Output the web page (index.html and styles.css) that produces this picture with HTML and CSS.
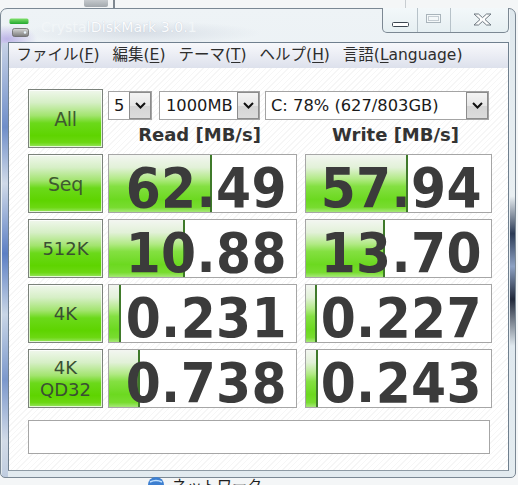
FILE: index.html
```html
<!DOCTYPE html>
<html lang="ja">
<head>
<meta charset="utf-8">
<title>CrystalDiskMark</title>
<link rel="stylesheet" href="styles.css">
</head>
<body>
<div class="deco deco-icon"></div>
<div class="deco deco-line1"></div>
<div class="deco deco-line2"></div>

<div class="window">
  <div class="titlebar">
    <svg class="app-icon" width="20" height="20" viewBox="0 0 20 20">
      <defs>
        <linearGradient id="gbar" x1="0" y1="0" x2="0" y2="1">
          <stop offset="0" stop-color="#7fe06a"/>
          <stop offset="1" stop-color="#22a830"/>
        </linearGradient>
        <linearGradient id="gdrv" x1="0" y1="0" x2="0" y2="1">
          <stop offset="0" stop-color="#d8d8d8"/>
          <stop offset="1" stop-color="#7a7a7a"/>
        </linearGradient>
      </defs>
      <rect x="0.5" y="0.5" width="19" height="5.5" rx="1.5" fill="url(#gbar)"/>
      <rect x="3.5" y="10.5" width="16" height="8" rx="2" fill="url(#gdrv)" stroke="#666" stroke-width="0.8"/>
      <circle cx="16" cy="14.5" r="1.2" fill="#eaf6ff"/>
    </svg>
    <span class="title"><span class="t-faint">Crysta</span>lDiskMark 3.0.<span class="t-faint">1</span></span>
    <div class="caption">
      <span class="cbtn cmin">
        <svg width="18" height="6" viewBox="0 0 18 6"><rect x="0.5" y="0.5" width="16" height="4" rx="1" fill="#fff" stroke="#3c4650"/></svg>
      </span>
      <span class="cbtn cmax">
        <svg width="16" height="10" viewBox="0 0 16 10"><rect x="0.5" y="0.5" width="14" height="8" fill="#f4f8f9" stroke="#a9b4bb"/><rect x="2.5" y="2.5" width="10" height="4" fill="none" stroke="#c4ccd2"/></svg>
      </span>
      <span class="cbtn cclose">
        <svg width="19" height="13" viewBox="0 0 19 13"><path d="M1 1 H5.5 L9.5 4.6 L13.5 1 H18 L12 6.5 L18 12 H13.5 L9.5 8.4 L5.5 12 H1 L7 6.5 Z" fill="#fdfdfd" stroke="#6e7880" stroke-width="1" stroke-linejoin="round"/></svg>
      </span>
    </div>
  </div>

  <div class="client">
    <div class="menubar">
      <span class="mi">ファイル(<u>F</u>)</span>
      <span class="mi">編集(<u>E</u>)</span>
      <span class="mi">テーマ(<u>T</u>)</span>
      <span class="mi">ヘルプ(<u>H</u>)</span>
      <span class="mi">言語(<u>L</u>anguage)</span>
    </div>

    <div class="content">
      <div class="grid">
        <div class="btn comic">All</div>
        <div class="topctl">
          <div class="combos">
            <div class="combo c-count"><span class="val">5</span><span class="arrow"><svg width="11" height="7" viewBox="0 0 11 7"><path d="M1 1 L5.5 5.5 L10 1" fill="none" stroke="#111" stroke-width="2"/></svg></span></div>
            <div class="combo c-size"><span class="val">1000MB</span><span class="arrow"><svg width="11" height="7" viewBox="0 0 11 7"><path d="M1 1 L5.5 5.5 L10 1" fill="none" stroke="#111" stroke-width="2"/></svg></span></div>
            <div class="combo c-drive"><span class="val">C: 78% (627/803GB)</span><span class="arrow"><svg width="11" height="7" viewBox="0 0 11 7"><path d="M1 1 L5.5 5.5 L10 1" fill="none" stroke="#111" stroke-width="2"/></svg></span></div>
          </div>
          <div class="heads">
            <div class="head">Read [MB/s]</div>
            <div class="head">Write [MB/s]</div>
          </div>
        </div>

        <div class="btn comic">Seq</div>
        <div class="res"><div class="bar" style="width:103px"></div><span class="num">62.49</span></div>
        <div class="res"><div class="bar" style="width:102px"></div><span class="num">57.94</span></div>

        <div class="btn">512K</div>
        <div class="res"><div class="bar" style="width:76px"></div><span class="num">10.88</span></div>
        <div class="res"><div class="bar" style="width:79px"></div><span class="num">13.70</span></div>

        <div class="btn">4K</div>
        <div class="res"><div class="bar" style="width:12px"></div><span class="num">0.231</span></div>
        <div class="res"><div class="bar" style="width:11px"></div><span class="num">0.227</span></div>

        <div class="btn two">4K<br>QD32</div>
        <div class="res"><div class="bar" style="width:31px"></div><span class="num">0.738</span></div>
        <div class="res"><div class="bar" style="width:12px"></div><span class="num">0.243</span></div>
      </div>
      <div class="comment"></div>
    </div>
  </div>
</div>

<div class="desk-label">
  <svg width="18" height="18" viewBox="0 0 18 18"><circle cx="9" cy="9" r="8" fill="#3d7fd0"/><path d="M3 6 Q9 3 15 6 M3 12 Q9 15 15 12" stroke="#bfe0ff" stroke-width="1.5" fill="none"/></svg>
  <span>ネットワーク</span>
</div>
</body>
</html>
```

FILE: styles.css
```css
html, body {
  margin: 0;
  padding: 0;
}

body {
  width: 518px;
  height: 485px;
  overflow: hidden;
  position: relative;
  background: #f4f6f7;
  font-family: "DejaVu Sans", "Noto Sans CJK JP", sans-serif;
}

/* desktop bits peeking out around the window */
.deco {
  position: absolute;
}

.deco-icon {
  left: 84px;
  top: 0;
  width: 24px;
  height: 7px;
  background: linear-gradient(to bottom, #b9bec2, #8e959b);
  border-radius: 0 0 2px 2px;
  opacity: 0.8;
}

.deco-line1 {
  left: 113px;
  top: 0;
  width: 2px;
  height: 9px;
  background: #7f8890;
}

.deco-line2 {
  left: 405px;
  top: 0;
  width: 1px;
  height: 9px;
  background: #c8cdd1;
}

.desk-label {
  position: absolute;
  left: 147px;
  top: 476px;
  display: flex;
  align-items: flex-start;
  gap: 7px;
  font-family: "Noto Sans CJK JP", sans-serif;
  font-size: 15px;
  line-height: 18px;
  color: #1e1e1e;
}

/* window */
.window {
  position: absolute;
  left: 0;
  top: 8px;
  border: 1px solid #7b8894;
  border-radius: 7px 7px 5px 5px;
  padding: 0 6px 6px 7px;
  width: 501px;
  height: 462px;
  display: flex;
  flex-direction: column;
  background:
    linear-gradient(to bottom, #c7d2e6 0%, #6f8ec9 18%, #d0dae8 30%, #5c7fc4 45%, #c9d6e6 58%, #7b98cc 72%, #d2dbe7 85%, #aebfd9 100%) left 1px top 34px / 6px 100% no-repeat,
    linear-gradient(to bottom, #dfe8ed 0%, #e9eff2 40%, #2b3a55 48%, #8ea2c4 55%, #20283a 62%, #dfe8ee 72%, #e4ecf0 100%) right 0 top 0 / 5px 100% no-repeat,
    radial-gradient(ellipse 30px 14px at 6px 30px, rgba(150,130,220,0.55), rgba(150,130,220,0) 100%),
    radial-gradient(ellipse 120px 12px at 140px 24px, rgba(190,198,212,0.45), rgba(190,198,212,0) 100%),
    linear-gradient(to bottom, #eef3f6 0%, #e7eef2 40%, #e2eaef 100%);
}

.titlebar {
  height: 33px;
  flex: none;
  position: relative;
  display: flex;
  align-items: center;
}

.app-icon {
  margin-left: 1px;
  margin-top: 4px;
  flex: none;
}

.title {
  margin-left: 12px;
  margin-top: 3px;
  font-family: "DejaVu Sans", sans-serif;
  font-size: 14px;
  color: #fbfcfe;
  text-shadow: 0 0 1px rgba(140, 150, 170, 0.45);
  letter-spacing: 0.1px;
}

.t-faint {
  color: #f2f6f8;
  text-shadow: none;
}

.caption {
  position: absolute;
  right: 0;
  top: -1px;
  height: 24px;
  display: flex;
  border: 1px solid #7c8893;
  border-top: none;
  border-radius: 0 0 5px 5px;
  overflow: hidden;
  background: linear-gradient(to bottom, #f3f8fa, #e6eff2);
}

.cbtn {
  display: flex;
  align-items: center;
  justify-content: center;
  height: 24px;
}

.cmin {
  width: 34px;
  border-right: 1px solid #b7c2c9;
  align-items: flex-end;
}

.cmin svg {
  margin-bottom: 4px;
  margin-left: 2px;
}

.cmax {
  width: 32px;
  border-right: 1px solid #b7c2c9;
}

.cmax svg {
  margin-top: -2px;
}

.cclose {
  width: 57px;
}

.cclose svg {
  margin-top: -1px;
  margin-left: 6px;
}

/* client */
.client {
  flex: 1;
  border: 1px solid #6f7f8e;
  border-bottom-color: #8e9aa4;
  display: flex;
  flex-direction: column;
  background: repeating-linear-gradient(-45deg, #ffffff 0 3px, #f6f6f6 3px 4px);
}

.menubar {
  height: 25px;
  flex: none;
  display: flex;
  align-items: center;
  padding-left: 1px;
  font-family: "DejaVu Sans", "Noto Sans CJK JP", sans-serif;
  font-size: 15.5px;
  color: #2e2e2e;
  background: linear-gradient(to bottom, #f7f8fb 0%, #eceef5 45%, #dde1ec 100%);
}

.mi {
  padding: 0 6.5px;
  line-height: 25px;
  white-space: nowrap;
}

.mi u {
  text-decoration-thickness: 1px;
  text-underline-offset: 2px;
}

.content {
  padding: 21px 19px 0 19px;
}

.grid {
  display: grid;
  grid-template-columns: 75px 186px 187px;
  grid-auto-rows: 59px;
  column-gap: 8px;
  row-gap: 6px;
}

.btn {
  box-sizing: border-box;
  border: 1px solid #7b827b;
  box-shadow: inset 0 0 0 1px rgba(255, 255, 255, 0.75);
  background: linear-gradient(to bottom, #f0f7ec 0%, #d6efc6 22%, #a2e46e 45%, #6bd91a 58%, #5ed400 80%, #6cd812 92%, #98e660 100%);
  display: flex;
  align-items: center;
  justify-content: center;
  text-align: center;
  font-family: "DejaVu Sans", sans-serif;
  font-size: 18px;
  color: #3a4f33;
  line-height: 22px;
  width: 75px;
}

.btn.comic {
  font-size: 19px;
  color: #3f5a30;
  letter-spacing: -0.3px;
}

.btn.two {
  line-height: 22px;
  padding-top: 1px;
}

.grid > .btn + .res,
.grid > .btn + .topctl {
  margin-left: -3px;
}

.topctl {
  grid-column: 2 / 4;
  display: flex;
  flex-direction: column;
}

.combos {
  margin-top: 2px;
  height: 29px;
  display: flex;
}

.combo {
  box-sizing: border-box;
  height: 29px;
  border: 1px solid #a4a4a4;
  background: #ffffff;
  display: flex;
  align-items: center;
  justify-content: space-between;
  font-family: "DejaVu Sans", sans-serif;
  font-size: 16.3px;
  color: #1a1a1a;
}

.combo .val {
  padding-left: 5px;
  white-space: nowrap;
}

.c-count {
  width: 44px;
}

.c-size {
  width: 101px;
  margin-left: 7px;
}

.c-size .val {
  padding-left: 6px;
}

.c-drive {
  width: 224px;
  margin-left: 5px;
}

.arrow {
  box-sizing: border-box;
  width: 22px;
  height: 27px;
  border: 1px solid #8c8c8c;
  background: linear-gradient(to bottom, #f4f4f4 0%, #e6e6e6 50%, #d4d4d4 51%, #dcdcdc 100%);
  display: flex;
  align-items: center;
  justify-content: center;
}

.heads {
  display: grid;
  grid-template-columns: 186px 187px;
  column-gap: 8px;
  margin-top: 4px;
}

.head {
  text-align: center;
  font-family: "DejaVu Sans", sans-serif;
  font-weight: bold;
  font-size: 18px;
  line-height: 22px;
  color: #333333;
}

.head:first-child {
  padding-right: 3px;
}

.res {
  position: relative;
  box-sizing: border-box;
  border: 1px solid #a6a6a6;
  background: #ffffff;
}

.bar {
  position: absolute;
  left: 0;
  top: 0;
  bottom: 0;
  box-sizing: border-box;
  border-right: 2px solid #3f7a2a;
  background: linear-gradient(to bottom, #f3f6f1 0%, #e2f1d8 22%, #b2ea86 42%, #84e042 55%, #6cd920 78%, #78dc30 92%, #a6e878 100%);
}

.num {
  position: relative;
  display: block;
  text-align: right;
  padding: 8px 9px 0 0;
  font-family: "DejaVu Sans Condensed", "DejaVu Sans", sans-serif;
  font-stretch: condensed;
  font-weight: bold;
  font-size: 56px;
  line-height: 49px;
  color: #3b3b3b;
  letter-spacing: 0.4px;
}

.comment {
  margin-top: 12px;
  height: 34px;
  box-sizing: border-box;
  width: 462px;
  border: 1px solid #a6a6a6;
  background: #ffffff;
}
```
